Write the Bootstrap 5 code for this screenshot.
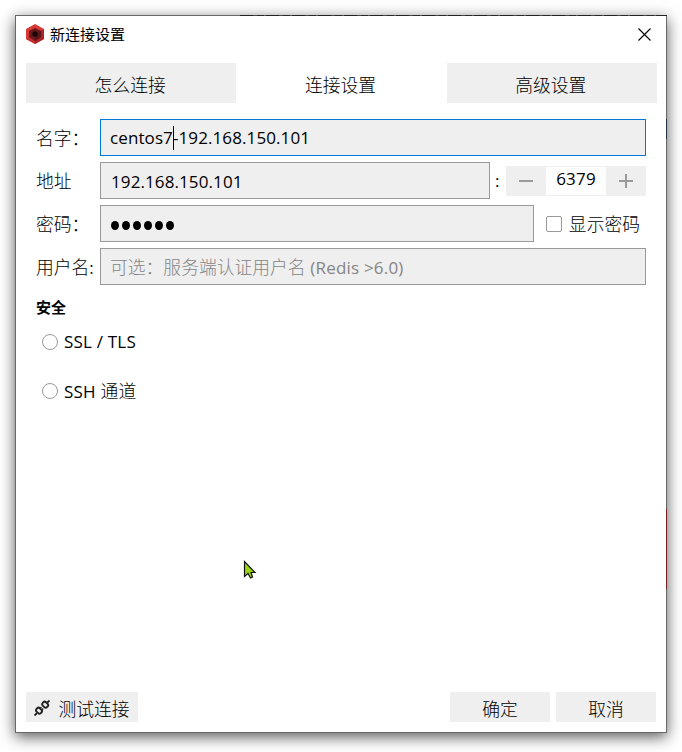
<!DOCTYPE html>
<html lang="zh-CN">
<head>
<meta charset="utf-8">
<meta name="viewport" content="width=device-width, initial-scale=1">
<title>新连接设置</title>
<link href="https://cdn.jsdelivr.net/npm/bootstrap@5.3.0/dist/css/bootstrap.min.css" rel="stylesheet">
<style>
body{font-family:"Open Sans","Noto Sans CJK SC",sans-serif;font-size:17px;line-height:24px;color:#000;background:#fff;height:752px;padding:15px 0 0 15px}
.dialog{width:652px;height:718px;border:1px solid #686868;background:#fff;box-shadow:0 4px 14px rgba(0,0,0,.65)}
.bleed{position:absolute;background:#252525}
.bleed-top{left:240px;top:15px;width:427px;height:1px;background:repeating-linear-gradient(90deg,#222 0 13px,#444 13px 17px,#2a2a2a 17px 24px,#555 24px 26px)}
.bleed-red{left:666px;top:509px;width:1px;height:80px;background:#762222}
.bleed-blue{left:666px;top:119px;width:1px;height:20px;background:#243247}
.titlebar{height:47px;padding:8px 15px 0 9px}
.caption{font-size:15px;line-height:20px;font-family:"Noto Sans CJK SC",sans-serif;margin-left:5px}
.close-x{margin-top:4px}
.zh{font-family:"Noto Sans CJK SC",sans-serif;font-weight:300;font-size:17.8px;white-space:nowrap}
.tabs{margin:0 9px 0 10px}
.tabs .nav-link{height:40px;color:#000;border-radius:0;background:#efefef;padding:9px 2px 0 0}
.tabs .nav-link.active{background:#fff;color:#000}
.settings{padding:16px 20px 0 20px}
.line{height:37px;margin-bottom:6px}
.caption-col{width:64px;flex:none;padding-bottom:2px}
.field{height:37px;border:1px solid #999;border-radius:0;background:#efefef;padding:6px 9px;color:#000;line-height:24px;white-space:nowrap;letter-spacing:.1px}
.field.focused{border-color:#0078d7}
.field.address{padding-left:10px;padding-top:7px}
.field.hint{color:#858585;letter-spacing:.2px;padding-top:5px}
.field.hint .zh{letter-spacing:0}
.colon{width:16px;padding-left:5px}
.caret{width:1px;height:24px;background:#000;margin-right:-1px}
.pwd{padding:10px 10px 6px;gap:3px}
.dot{width:8px;height:9px;border-radius:50%;background:#000}
.show-pwd{margin-left:12px;margin-right:6px;gap:7px}
.show-pwd .zh{padding-bottom:2px}
.spin{width:140px;height:30px;background:#efefef}
.spin>div{width:40px}
.spin .num{width:60px;height:28px;background:#fff;line-height:24px;letter-spacing:.2px}
.box{width:16px;height:16px;border:1px solid #999;border-radius:2px;background:#fff}
.ring{width:16px;height:16px;border:1px solid #999;border-radius:50%;margin:0 6px;flex:none}
.heading{font:700 15px/20px "Noto Sans CJK SC",sans-serif;margin:12px 0 13px}
.opt{height:24px;letter-spacing:.2px;margin-bottom:25px}
.opt .zh{letter-spacing:.2px}
.footer-bar{padding:0 10px 10px}
.action{height:30px;width:100px;border-radius:0;border:0;background:#efefef;color:#000;padding:4px 0 2px;line-height:24px}
.action.test{width:112px}
.cancel{margin-left:6px}
.pointer{position:absolute;left:243px;top:560px}
</style>
<script src="https://cdn.jsdelivr.net/npm/bootstrap@5.3.0/dist/js/bootstrap.bundle.min.js"></script>
</head>
<body>
<main class="dialog d-flex flex-column">
  <header class="titlebar d-flex align-items-start">
    <svg width="20" height="20" viewBox="0 0 20 20"><path fill="#d93a35" d="M10 0l9 5v10l-9 5-9-5V5z"/><path fill="#a82427" d="M10 10l9-5v10l-9 5z"/><path fill="#c52e2c" d="M1 15l9-5v10z"/><path fill="#6a191b" d="M10 4l6 3v6l-6 4-6-4V7z"/><path fill="#5b1518" d="M10 10l6-3v6l-6 4z"/><circle cx="10" cy="10" r="2.7" fill="#190608"/></svg>
    <div class="caption">新连接设置</div>
    <svg class="close-x ms-auto" width="13" height="13" viewBox="0 0 13 13"><path d="M.5.5l12 12m0-12l-12 12" stroke="#000" stroke-width="1.1"/></svg>
  </header>
  <nav class="tabs nav nav-justified nav-pills flex-nowrap">
    <a class="nav-link zh">怎么连接</a>
    <a class="nav-link active zh">连接设置</a>
    <a class="nav-link zh">高级设置</a>
  </nav>
  <section class="settings flex-grow-1">
    <div class="line d-flex align-items-center">
      <div class="caption-col zh">名字：</div>
      <div class="field focused flex-grow-1 d-flex">centos7<span class="caret"></span>-192.168.150.101</div>
    </div>
    <div class="line d-flex align-items-center">
      <div class="caption-col zh">地址</div>
      <div class="field address flex-grow-1">192.168.150.101</div>
      <span class="colon flex-shrink-0">:</span>
      <div class="spin d-flex align-items-center text-center flex-shrink-0">
        <div class="d-flex justify-content-center"><svg width="14" height="14"><path d="M0 7h14" stroke="#9b9b9b" stroke-width="2"/></svg></div>
        <div class="num">6379</div>
        <div class="d-flex justify-content-center"><svg width="14" height="14"><path d="M0 7h14M7 0v14" stroke="#9b9b9b" stroke-width="2"/></svg></div>
      </div>
    </div>
    <div class="line d-flex align-items-center">
      <div class="caption-col zh">密码：</div>
      <div class="field flex-grow-1 d-flex align-items-center pwd"><span class="dot"></span><span class="dot"></span><span class="dot"></span><span class="dot"></span><span class="dot"></span><span class="dot"></span></div>
      <label class="d-flex align-items-center show-pwd"><span class="box"></span><span class="zh">显示密码</span></label>
    </div>
    <div class="line d-flex align-items-center">
      <div class="caption-col zh">用户名:</div>
      <div class="field hint flex-grow-1"><span class="zh">可选：服务端认证用户名</span> (Redis &gt;6.0)</div>
    </div>
    <h2 class="heading">安全</h2>
    <div class="opt d-flex align-items-center"><span class="ring"></span>SSL / TLS</div>
    <div class="opt d-flex align-items-center"><span class="ring"></span><span>SSH <span class="zh">通道</span></span></div>
  </section>
  <footer class="footer-bar d-flex">
    <button class="btn action test zh d-flex align-items-center justify-content-center gap-2 me-auto">
      <svg width="16" height="16" viewBox="0 0 16 16" fill="none" stroke="#222" stroke-width="1.9"><path d="M.5 15.500L3 13M13 3L15.500.5"/><rect x="-3" y="-2.300" width="6" height="4.600" rx="1.900" transform="translate(5 10.700) rotate(45)"/><rect x="-3" y="-2.300" width="6" height="4.600" rx="1.900" transform="translate(11.200 4.700) rotate(45)"/><path d="M6 8.500l1.500-1.500M7.800 10l1.500-1.500" stroke-width="1.300"/></svg>测试连接</button>
    <button class="btn action zh">确定</button>
    <button class="btn action zh cancel">取消</button>
  </footer>
</main>
<span class="bleed bleed-top"></span><span class="bleed bleed-blue"></span><span class="bleed bleed-red"></span>
<svg class="pointer" width="14" height="20" viewBox="0 0 14 20"><path d="M1.500 1.500v15l3.500-3 2.500 4.500 2-1-1.500-4.500h4z" fill="#99d411" stroke="#111" stroke-width="1.200"/></svg>
</body>
</html>
